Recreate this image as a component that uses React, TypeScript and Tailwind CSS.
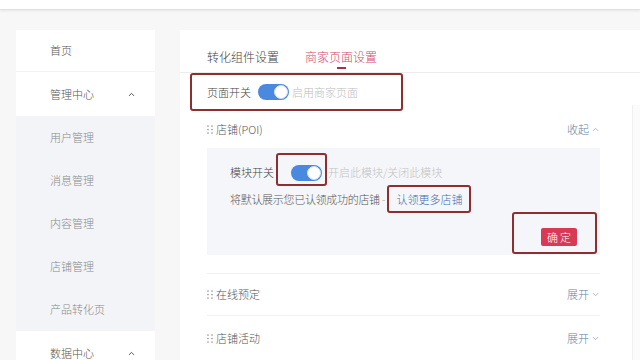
import React from "react";
import { ChevronUp, ChevronDown } from "lucide-react";

const Dots = () => (
  <svg width="6" height="9" viewBox="0 0 6 9" className="mr-[3px] shrink-0">
    {[0, 1].map((c) =>
      [0, 1, 2].map((r) => (
        <circle key={`${c}-${r}`} cx={1 + c * 4} cy={1 + r * 3.5} r="0.85" fill="#9a9a9a" />
      ))
    )}
  </svg>
);

const Toggle = () => (
  <div className="w-[31px] h-[16px] rounded-full bg-[#4a89e0] flex items-center justify-end pr-[1px] shrink-0">
    <div className="w-[14px] h-[14px] rounded-full bg-white border border-[#d5dfee]" />
  </div>
);

const SubItem = ({ label }: { label: string }) => (
  <div className="h-[43px] shrink-0 flex items-center pl-[34px] text-[11px] text-[#8a8a8a]">{label}</div>
);

export default function App() {
  return (
    <div className="w-[640px] h-[360px] overflow-hidden bg-[#f7f7f8] flex flex-col font-light font-['Noto_Sans_CJK_SC','Noto_Sans',sans-serif]">
      <div className="h-[10px] shrink-0 bg-white border-b border-[#e0e0e0] shadow-[0_1px_3px_rgba(0,0,0,0.07)]" />
      <div className="flex flex-1 pt-[20px] min-h-0">
        <aside className="ml-[16px] w-[139px] flex flex-col shrink-0">
          <div className="bg-white shrink-0">
            <div className="h-[42px] flex items-center pl-[34px] text-[11px] text-[#555] border-b border-[#f3f3f3]">首页</div>
            <div className="h-[44px] flex items-center justify-between pl-[34px] pr-[19px] text-[11px] text-[#555]">
              <span>管理中心</span>
              <ChevronUp size={9} strokeWidth={2.2} color="#333" />
            </div>
          </div>
          <div className="bg-[#f3f4f8] shrink-0">
            <SubItem label="用户管理" />
            <SubItem label="消息管理" />
            <SubItem label="内容管理" />
            <SubItem label="店铺管理" />
            <SubItem label="产品转化页" />
          </div>
          <div className="bg-white h-[44px] shrink-0 flex items-center justify-between pl-[34px] pr-[19px] text-[11px] text-[#555]">
            <span>数据中心</span>
            <ChevronUp size={9} strokeWidth={2.2} color="#333" />
          </div>
        </aside>

        <main className="ml-[25px] flex-1 bg-white flex flex-col">
          <div className="h-[43px] shrink-0 border-b border-[#ececec] flex items-start pt-[19px] pl-[27px] text-[12px]">
            <span className="text-[#444] w-[98px] leading-[16px]">转化组件设置</span>
            <div className="flex flex-col items-center">
              <span className="text-[#d2496b] leading-[16px]">商家页面设置</span>
              <div className="w-[9px] h-[2px] bg-[#a3334a] mt-[2px]" />
            </div>
          </div>

          <div className="flex flex-1">
            <div className="w-[452px] pl-[27px] pr-[32px] flex flex-col">
              <div className="ml-[-17px] w-[213px] h-[38px] shrink-0 border-2 border-[#8e2e2e] rounded-[3px] flex items-center pl-[15px] text-[11px]">
                <span className="text-[#444]">页面开关</span>
                <div className="ml-[7px]">
                  <Toggle />
                </div>
                <span className="ml-[3px] text-[#bdbdbd]">启用商家页面</span>
              </div>

              <div className="h-[37px] shrink-0 flex items-center justify-between text-[11px]">
                <div className="flex items-center text-[#555]">
                  <Dots />
                  <span>店铺(POI)</span>
                </div>
                <div className="flex items-center gap-[2px] text-[#6380a6]">
                  <span>收起</span>
                  <ChevronUp size={9} strokeWidth={1.5} />
                </div>
              </div>

              <div className="h-[107px] shrink-0 bg-[#f5f6f9] pl-[23px] pr-[3px] pt-[5px] flex flex-col text-[11px]">
                <div className="h-[33px] flex items-center">
                  <span className="text-[#444] mt-[5px]">模块开关</span>
                  <div className="ml-[2px] w-[51px] h-[33px] border-2 border-[#8e2e2e] rounded-[3px] flex items-end justify-end pr-[3px] pb-[3px]">
                    <Toggle />
                  </div>
                  <span className="ml-[1px] mt-[5px] text-[#c2c2c2]">开启此模块/关闭此模块</span>
                </div>
                <div className="h-[28px] mt-[-1px] flex items-center">
                  <span className="text-[#555] tracking-[-0.3px]">将默认展示您已认领成功的店铺</span>
                  <span className="ml-[2px] text-[#aaa]">-</span>
                  <div className="ml-[2px] w-[84px] h-[28px] border-2 border-[#8e2e2e] rounded-[3px] flex items-center pl-[7px] text-[#3e6fb0]">
                    认领更多店铺
                  </div>
                </div>
                <div className="flex justify-end mt-[-1px]">
                  <div className="w-[85px] h-[42px] border-2 border-[#8e2e2e] rounded-[3px] flex items-start justify-end pt-[14px] pr-[18px]">
                    <div className="w-[36px] h-[18px] bg-[#d83a56] rounded-[2px] text-white text-[11px] flex items-center justify-center tracking-[2px] pl-[2px]">
                      确定
                    </div>
                  </div>
                </div>
              </div>

              <div className="mt-[18px] shrink-0 border-t border-[#f1f1f1] h-[42px] flex items-center justify-between text-[11px]">
                <div className="flex items-center text-[#555]">
                  <Dots />
                  <span>在线预定</span>
                </div>
                <div className="flex items-center gap-[2px] text-[#6380a6]">
                  <span>展开</span>
                  <ChevronDown size={9} strokeWidth={1.5} />
                </div>
              </div>
              <div className="border-t shrink-0 border-[#f1f1f1] h-[46px] flex items-center justify-between text-[11px]">
                <div className="flex items-center text-[#555]">
                  <Dots />
                  <span>店铺活动</span>
                </div>
                <div className="flex items-center gap-[2px] text-[#6380a6]">
                  <span>展开</span>
                  <ChevronDown size={9} strokeWidth={1.5} />
                </div>
              </div>
            </div>
            <div className="flex-1 mt-[32px] border-l border-[#f0f0f0] bg-[#fbfbfb]" />
          </div>
        </main>
      </div>
    </div>
  );
}
